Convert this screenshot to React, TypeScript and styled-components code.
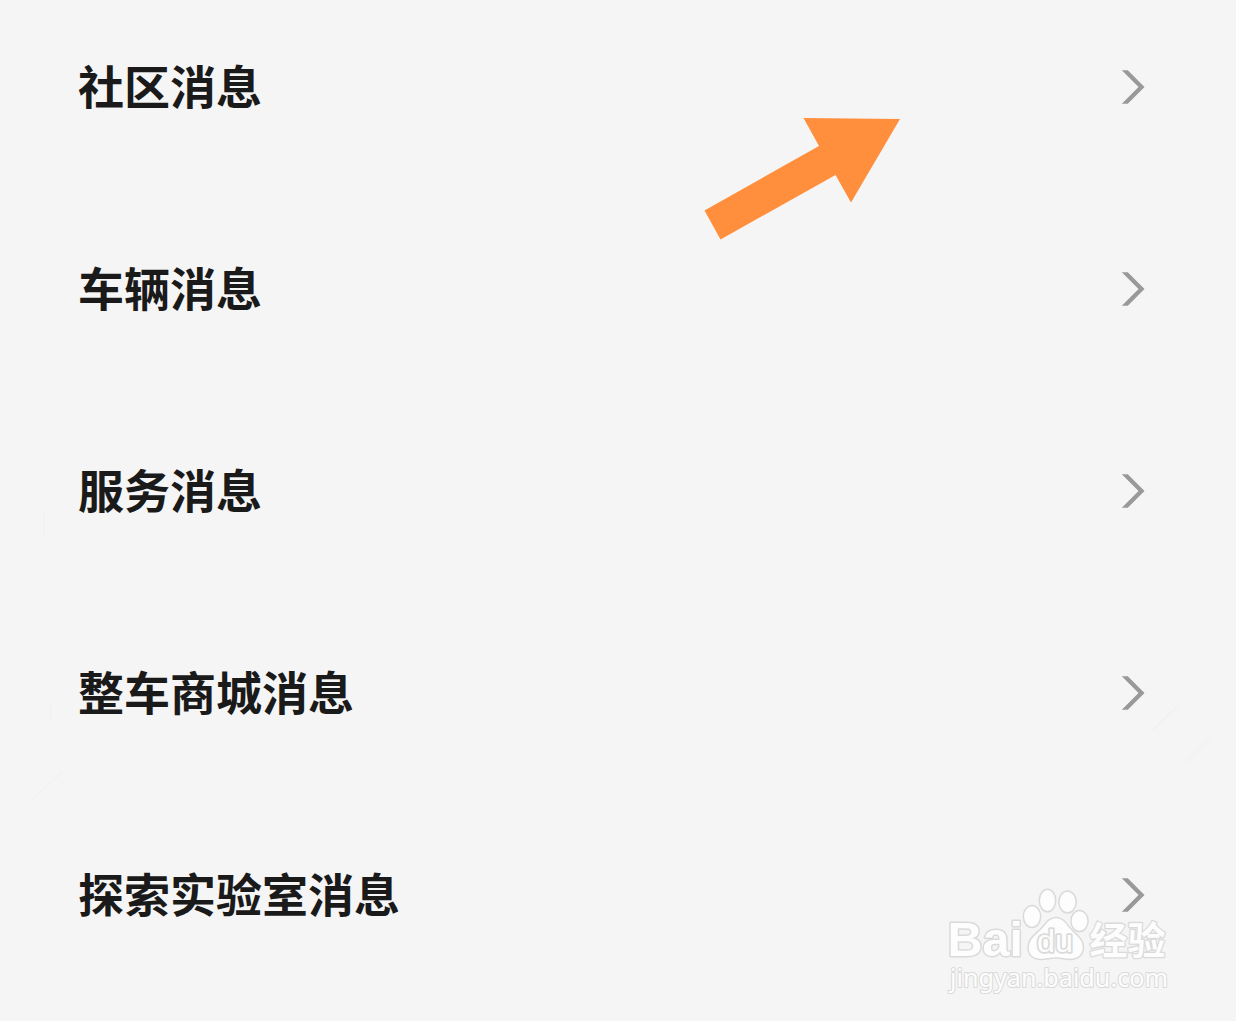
import styled, { createGlobalStyle } from "styled-components";

const GlobalStyle = createGlobalStyle`
  body {
    margin: 0;
    background: #f5f5f5;
    font-family: "Noto Sans CJK SC", "Liberation Sans", sans-serif;
  }
`;

const Page = styled.main`
  position: relative;
  box-sizing: border-box;
  width: 1236px;
  height: 1021px;
  padding: 57px 91px 0 78px;
  overflow: hidden;
  background: #f5f5f5;
`;

const MessageList = styled.ul`
  display: flex;
  flex-direction: column;
  gap: 142px;
  margin: 0;
  padding: 0;
  list-style-type: none;
`;

const MessageRow = styled.li`
  display: flex;
  align-items: center;
  justify-content: space-between;
  height: 60px;
`;

const MessageTitle = styled.span`
  padding-bottom: 6px;
  color: #1a1a1a;
  font-size: 46px;
  font-weight: 700;
  line-height: 60px;
  white-space: nowrap;
`;

const ChevronIcon = styled.svg`
  display: block;
  width: 24px;
  height: 34px;
  fill: #999;
`;

const PointerArrow = styled.svg`
  position: absolute;
  top: 110px;
  left: 700px;
  width: 210px;
  height: 140px;
  fill: #ff8f3c;
`;

const Scratches = styled.svg`
  position: absolute;
  inset: 0;
  width: 100%;
  height: 100%;
  fill: none;
  stroke: #f1f1f1;
  stroke-width: 1.5;
`;

const Watermark = styled.svg`
  position: absolute;
  top: 880px;
  left: 940px;
  width: 240px;
  height: 120px;
  fill: #fdfdfd;
  stroke: #dadada;
  stroke-width: 1.5;
  stroke-linejoin: round;
`;

const LogoText = styled.text<{
  size: number;
  family?: string;
  weight?: number;
  outline?: number;
}>`
  font-family: ${(props) => props.family ?? '"Liberation Sans"'}, sans-serif;
  font-size: ${(props) => props.size}px;
  font-weight: ${(props) => props.weight ?? 700};
  stroke-width: ${(props) => props.outline ?? 3};
  paint-order: stroke;
`;

const messages = [
  "社区消息",
  "车辆消息",
  "服务消息",
  "整车商城消息",
  "探索实验室消息",
];

const Chevron = () => (
  <ChevronIcon viewBox="0 0 24 34">
    <path d="M0.8 0.3H6.8L23.5 17L6.8 33.7H0.8L17.5 17Z" />
  </ChevronIcon>
);

const BaiduWatermark = () => (
  <Watermark viewBox="0 0 240 120">
    <LogoText x="7.5" y="76" size={48} textLength="75.5" lengthAdjust="spacingAndGlyphs">
      Bai
    </LogoText>
    <ellipse cx="92" cy="36.5" rx="8.7" ry="11" />
    <ellipse cx="107.5" cy="20.5" rx="8.2" ry="11.3" />
    <ellipse cx="127.5" cy="22" rx="8.7" ry="11" />
    <ellipse cx="139.5" cy="41" rx="8.6" ry="10.6" />
    <path d="M116 37.5C108 37.5 105 45 99.5 50C93 56 88 60 88 67C88 75 93 79.5 101 79.5C107 79.5 110 78 116 78C122 78 124 79.5 130 79.5C138 79.5 143.5 75 143.5 67C143.5 60 138 56 132 50C127 45 124 37.5 116 37.5Z" />
    <LogoText x="97" y="71.5" size={31} weight={400} outline={3.4} textLength="36" lengthAdjust="spacingAndGlyphs">
      du
    </LogoText>
    <LogoText x="149.5" y="74" size={38} family='"Noto Sans CJK SC"' outline={2.6}>
      经验
    </LogoText>
    <LogoText x="10" y="106.5" size={26} family='"Noto Sans"' weight={400} outline={2.2} textLength="218" lengthAdjust="spacingAndGlyphs">
      jingyan.baidu.com
    </LogoText>
  </Watermark>
);

const App = () => (
  <>
    <GlobalStyle />
    <Page>
      <MessageList>
        {messages.map((message) => (
          <MessageRow key={message}>
            <MessageTitle>{message}</MessageTitle>
            <Chevron />
          </MessageRow>
        ))}
      </MessageList>
      <Scratches viewBox="0 0 1236 1021">
        <path d="M1153 730L1179 705M1185 763L1211 737M33 799L63 771M44 513V536M51 704V719" />
      </Scratches>
      <PointerArrow viewBox="0 0 210 140">
        <path d="M103.5 8L200 9L151 92.5L135.5 65L20.5 129.5L4.5 100.5L119 36Z" />
      </PointerArrow>
      <BaiduWatermark />
    </Page>
  </>
);

export default App;
